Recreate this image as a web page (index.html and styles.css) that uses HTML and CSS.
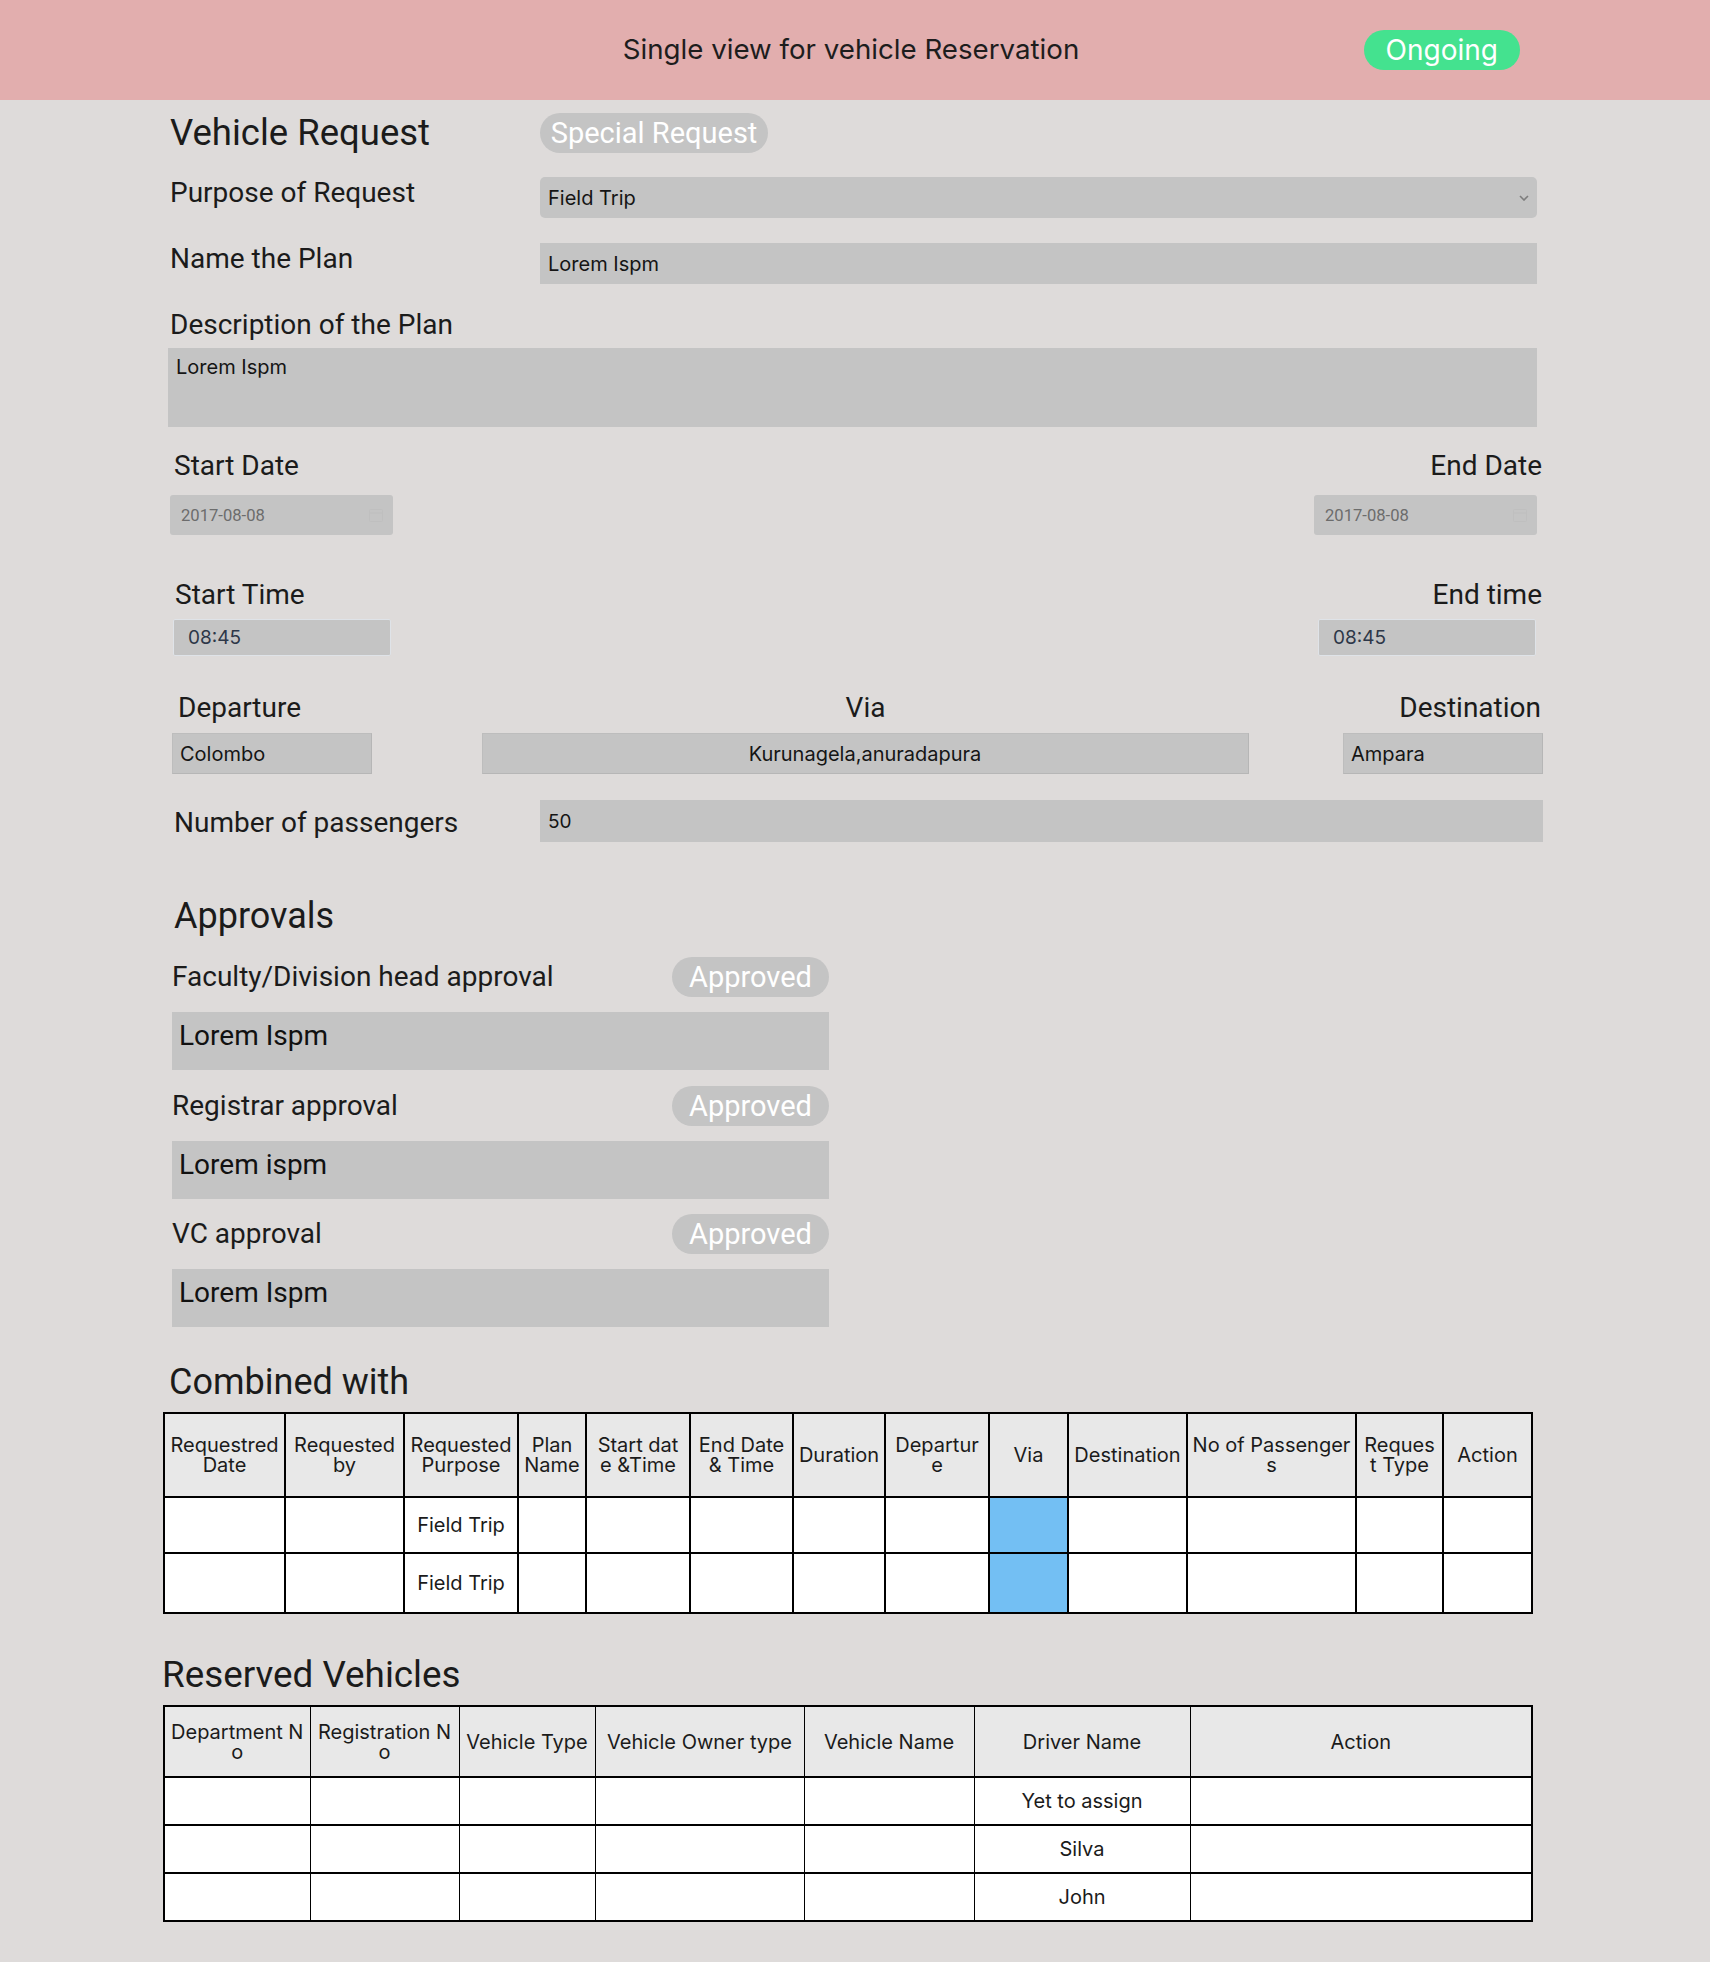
FILE: index.html
```html
<!DOCTYPE html>
<html lang="en">
<head>
<meta charset="utf-8">
<title>Single view for vehicle Reservation</title>
<link rel="stylesheet" href="styles.css">
</head>
<body>
<div class="app">
  <header class="topbar">
    <h1 class="topbar-title">Single view for vehicle Reservation</h1>
    <div class="topbar-status"><span class="pill pill-green">Ongoing</span></div>
  </header>

  <main class="page">
    <div class="form-row row-title">
      <h2 class="request-title">Vehicle Request</h2>
      <div><span class="pill pill-grey pill-special">Special Request</span></div>
    </div>

    <div class="form-row row-purpose">
      <div class="label">Purpose of Request</div>
      <div class="field field-select">
        <span>Field Trip</span>
        <svg class="chevron" width="10" height="6" viewBox="0 0 10 6"><path d="M1 1l4 4 4-4" fill="none" stroke="#7d7d7d" stroke-width="1.6"/></svg>
      </div>
    </div>

    <div class="form-row row-name">
      <div class="label">Name the Plan</div>
      <div class="field">Lorem Ispm</div>
    </div>

    <div class="label label-desc">Description of the Plan</div>
    <div class="textarea">Lorem Ispm</div>

    <div class="split-row labels-dates">
      <div class="label">Start Date</div>
      <div class="label">End Date</div>
    </div>
    <div class="split-row inputs-dates">
      <div class="date-field">
        <span>2017-08-08</span>
        <svg class="cal" width="16" height="16" viewBox="0 0 16 16"><rect x="1.5" y="2.5" width="13" height="12" rx="1" fill="none" stroke="#bcbcbc" stroke-width="1"/><path d="M1.5 6h13" stroke="#bcbcbc" stroke-width="1"/></svg>
      </div>
      <div class="date-field">
        <span>2017-08-08</span>
        <svg class="cal" width="16" height="16" viewBox="0 0 16 16"><rect x="1.5" y="2.5" width="13" height="12" rx="1" fill="none" stroke="#bcbcbc" stroke-width="1"/><path d="M1.5 6h13" stroke="#bcbcbc" stroke-width="1"/></svg>
      </div>
    </div>

    <div class="split-row labels-times">
      <div class="label">Start Time</div>
      <div class="label">End time</div>
    </div>
    <div class="split-row inputs-times">
      <div class="time-field">08:45</div>
      <div class="time-field">08:45</div>
    </div>

    <div class="route-row labels-route">
      <div class="label route-dep">Departure</div>
      <div class="label route-via">Via</div>
      <div class="label route-dest">Destination</div>
    </div>
    <div class="route-row inputs-route">
      <div class="field field-line">Colombo</div>
      <div class="field field-line field-via">Kurunagela,anuradapura</div>
      <div class="field field-line">Ampara</div>
    </div>

    <div class="form-row row-pass">
      <div class="label">Number of passengers</div>
      <div class="field field-pass">50</div>
    </div>

    <section class="approvals">
      <h2 class="section-title approvals-title">Approvals</h2>

      <div class="approval-row first">
        <div class="label">Faculty/Division head approval</div>
        <span class="pill pill-grey pill-approved">Approved</span>
      </div>
      <div class="approval-box">Lorem Ispm</div>

      <div class="approval-row">
        <div class="label">Registrar approval</div>
        <span class="pill pill-grey pill-approved">Approved</span>
      </div>
      <div class="approval-box">Lorem ispm</div>

      <div class="approval-row">
        <div class="label">VC approval</div>
        <span class="pill pill-grey pill-approved">Approved</span>
      </div>
      <div class="approval-box">Lorem Ispm</div>
    </section>

    <h2 class="section-title combined-title">Combined with</h2>
    <table class="grid combined">
      <colgroup>
        <col style="width:121px"><col style="width:119px"><col style="width:114px"><col style="width:68px"><col style="width:104px"><col style="width:103px"><col style="width:92px"><col style="width:104px"><col style="width:79px"><col style="width:119px"><col style="width:169px"><col style="width:87px"><col style="width:89px">
      </colgroup>
      <thead>
        <tr>
          <th>Requestred Date</th><th>Requested by</th><th>Requested Purpose</th><th>Plan Name</th><th class="th-tight">Start date &amp;Time</th><th>End Date &amp; Time</th><th>Duration</th><th>Departure</th><th>Via</th><th>Destination</th><th>No of Passengers</th><th>Request Type</th><th>Action</th>
        </tr>
      </thead>
      <tbody>
        <tr class="r1">
          <td></td><td></td><td>Field Trip</td><td></td><td></td><td></td><td></td><td></td><td class="via"></td><td></td><td></td><td></td><td></td>
        </tr>
        <tr class="r2">
          <td></td><td></td><td>Field Trip</td><td></td><td></td><td></td><td></td><td></td><td class="via"></td><td></td><td></td><td></td><td></td>
        </tr>
      </tbody>
    </table>

    <h2 class="section-title reserved-title">Reserved Vehicles</h2>
    <table class="grid reserved">
      <colgroup>
        <col style="width:146px"><col style="width:149px"><col style="width:136px"><col style="width:209px"><col style="width:170px"><col style="width:216px"><col style="width:342px">
      </colgroup>
      <thead>
        <tr>
          <th>Department No</th><th>Registration No</th><th>Vehicle Type</th><th>Vehicle Owner type</th><th>Vehicle Name</th><th>Driver Name</th><th>Action</th>
        </tr>
      </thead>
      <tbody>
        <tr><td></td><td></td><td></td><td></td><td></td><td>Yet to assign</td><td></td></tr>
        <tr><td></td><td></td><td></td><td></td><td></td><td>Silva</td><td></td></tr>
        <tr><td></td><td></td><td></td><td></td><td></td><td>John</td><td></td></tr>
      </tbody>
    </table>
  </main>
</div>
</body>
</html>
```

FILE: styles.css
```css
* { box-sizing: border-box; }

body {
  margin: 0;
  background: #ffffff;
  font-family: Roboto, "Liberation Sans", sans-serif;
  color: #1b1b1b;
}

.app {
  background: #dedbda;
  padding-bottom: 40px;
}

/* ---------- top bar ---------- */
.topbar {
  height: 100px;
  background: #e2aeae;
  display: grid;
  grid-template-columns: 1fr auto 1fr;
  align-items: center;
}
.topbar-title {
  grid-column: 2;
  margin: 0 8px 0 0;
  font-family: Inter, sans-serif;
  font-weight: 400;
  font-size: 27.7px;
  line-height: 1;
  color: #1d1d1d;
}
.topbar-status {
  grid-column: 3;
  justify-self: end;
  margin-right: 190px;
}

/* ---------- pills ---------- */
.pill {
  display: inline-flex;
  align-items: center;
  justify-content: center;
  height: 40px;
  border-radius: 20px;
  color: #ffffff;
  white-space: nowrap;
}
.pill-green {
  background: #44e28f;
  font-family: Inter, sans-serif;
  font-size: 28px;
  padding: 0 22px;
}
.pill-grey {
  background: #c4c4c4;
  font-family: Roboto, sans-serif;
  font-size: 29px;
}
.pill-special { width: 228px; }
.pill-approved { width: 157px; }

/* ---------- page ---------- */
.page {
  padding: 13px 168px 0 170px;
}

.label {
  font-size: 28px;
  line-height: 32px;
}

.form-row {
  display: grid;
  grid-template-columns: 370px 997px;
  align-items: center;
}
.form-row .label { margin-top: -5px; margin-bottom: 5px; }
.row-title { height: 40px; }
.request-title {
  margin: 0;
  font-weight: 400;
  font-size: 36.5px;
  line-height: 40px;
}
.row-purpose { margin-top: 24px; }
.row-name { margin-top: 25px; }

.field {
  background: #c4c4c4;
  height: 41px;
  display: flex;
  align-items: center;
  padding: 0 8px;
  font-family: Inter, sans-serif;
  font-size: 20px;
  color: #151515;
}
.field-select {
  justify-content: space-between;
  border-radius: 5px;
}

.label-desc { margin-top: 25px; }
.textarea {
  margin-top: 7px;
  margin-left: -2px;
  width: 1369px;
  height: 79px;
  background: #c4c4c4;
  padding: 7px 8px;
  font-family: Inter, sans-serif;
  font-size: 20px;
  line-height: 24px;
  color: #151515;
}

.split-row {
  display: flex;
  justify-content: space-between;
  align-items: center;
}
.labels-dates { margin-top: 23px; padding-left: 4px; }
.inputs-dates { margin-top: 13px; padding-right: 5px; }
.date-field {
  width: 223px;
  height: 40px;
  background: #c4c4c4;
  border-radius: 3px;
  display: flex;
  align-items: center;
  justify-content: space-between;
  padding: 0 9px 0 11px;
  font-family: Roboto, sans-serif;
  font-size: 16.6px;
  color: #6c6c6c;
}
.cal { opacity: 0.6; }

.labels-times { margin-top: 44px; padding-left: 5px; }
.inputs-times { margin-top: 8px; padding-left: 3px; padding-right: 6px; }
.time-field {
  width: 218px;
  height: 37px;
  background: #c4c4c4;
  border: 1px solid #dfe3e8;
  border-radius: 2px;
  display: flex;
  align-items: center;
  padding-left: 14px;
  font-family: Inter, sans-serif;
  font-size: 19px;
  color: #2d3748;
}

.route-row {
  display: grid;
  grid-template-columns: 200px 1fr 200px;
  align-items: center;
  margin-left: 2px;
  margin-right: -1px;
}
.labels-route { margin-top: 36px; }
.route-dep { padding-left: 6px; }
.route-via { text-align: center; margin: 0 94px 0 110px; }
.route-dest { text-align: right; padding-right: 2px; }
.inputs-route { margin-top: 9px; }
.field-line {
  border: 1px solid #b9b9b9;
  border-color: #bdbdbd #b6b6b6 #b6b6b6 #bdbdbd;
  padding-left: 7px;
  font-size: 20px;
}
.field-via { margin: 0 94px 0 110px; justify-content: center; }

.row-pass {
  margin-top: 26px;
  grid-template-columns: 370px 1fr;
  padding-left: 4px;
  margin-right: -1px;
}
.row-pass .label { margin-top: 0; margin-bottom: 0; padding-top: 3px; }
.row-pass .field { height: 42px; margin-left: -4px; font-size: 19px; }

/* ---------- approvals ---------- */
.section-title {
  margin: 0;
  font-weight: 400;
  font-size: 36px;
  line-height: 40px;
}
.approvals {
  width: 657px;
  margin-left: 2px;
}
.approvals-title { margin-top: 54px; padding-left: 2px; }
.approval-row {
  display: flex;
  justify-content: space-between;
  align-items: center;
  height: 40px;
  margin-top: 15.5px;
}
.approval-row.first { margin-top: 21px; }
.approval-box {
  margin-top: 15px;
  height: 58px;
  background: #c4c4c4;
  padding: 7px 7px;
  font-size: 28px;
  line-height: 33px;
  color: #111;
}

/* ---------- tables ---------- */
.combined-title { margin-top: 35px; margin-left: -1px; }
.reserved-title { margin-top: 41px; margin-left: -8px; font-size: 36.8px; }

.grid {
  margin-left: -7px;
  border-collapse: collapse;
  table-layout: fixed;
  background: #ffffff;
  font-family: Inter, sans-serif;
  font-size: 20px;
  color: #1b1b1b;
}
.combined { margin-top: 10px; }
.reserved { margin-top: 10px; }
.grid th {
  background: #e8e8e8;
  font-weight: 400;
  line-height: 20px;
  padding: 0 4px;
  text-align: center;
  word-break: break-all;
}
.grid th.th-tight { padding: 0 6px; }
.grid td {
  text-align: center;
  padding: 0 4px;
}

.combined { width: 1368px; border: 2px solid #000; }
.combined th, .combined td { border: 2px solid #000; }
.combined thead tr { height: 84px; }
.combined .r1 { height: 56px; }
.combined .r2 { height: 60px; }
.combined td.via { background: #73bff3; }

.reserved { width: 1368px; border: 2px solid #000; }
.reserved th, .reserved td {
  border-left: 1px solid #000;
  border-right: 1px solid #000;
  border-top: 2px solid #000;
  border-bottom: 2px solid #000;
}
.reserved thead tr { height: 71px; }
.reserved tbody tr { height: 48px; }
```
